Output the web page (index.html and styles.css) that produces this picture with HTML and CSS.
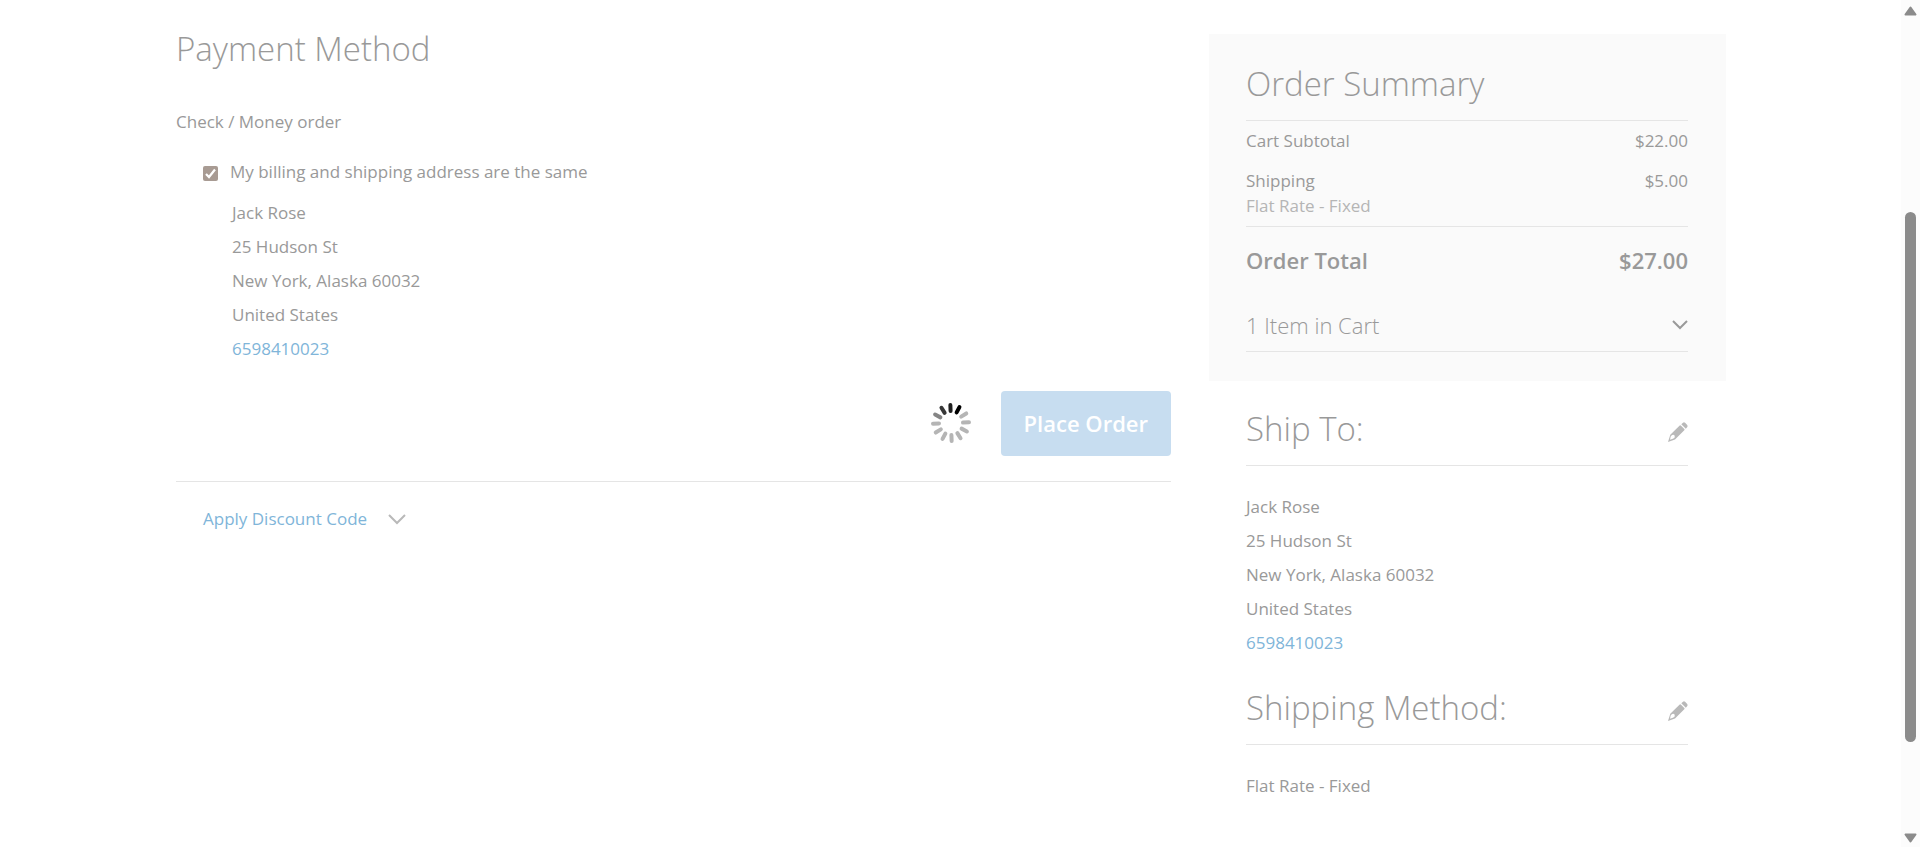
FILE: index.html
```html
<!DOCTYPE html>
<html lang="en">
<head>
<meta charset="utf-8">
<title>Checkout</title>
<link rel="stylesheet" href="styles.css">
</head>
<body>
<div class="page">
  <div class="checkout">
    <main class="payment">
      <h1 class="title">Payment Method</h1>
      <h2 class="method-name">Check / Money order</h2>
      <div class="method-content">
        <label class="same-address" for="same"><input id="same" class="checkbox" type="checkbox" checked>My billing and shipping address are the same</label>
        <address class="address billing-address">
          Jack Rose<br>25 Hudson St<br>New York, Alaska 60032<br>United States<br><a class="link" href="#">6598410023</a>
        </address>
      </div>
      <div class="actions">
        <svg class="spinner" viewBox="-21 -20 42 42" role="img" aria-label="Loading">
          <g stroke="#b5b5b5" stroke-width="4" stroke-linecap="round" transform="rotate(-2)">
            <path d="M0-12V-18" stroke="#202020"/>
            <path d="M0-12V-18" stroke="#000" transform="rotate(30)"/>
            <path d="M0-12V-18" transform="rotate(60)"/>
            <path d="M0-12V-18" transform="rotate(90)"/>
            <path d="M0-12V-18" transform="rotate(120)"/>
            <path d="M0-12V-18" transform="rotate(150)"/>
            <path d="M0-12V-18" transform="rotate(180)"/>
            <path d="M0-12V-18" transform="rotate(210)"/>
            <path d="M0-12V-18" transform="rotate(240)"/>
            <path d="M0-12V-18" transform="rotate(270)"/>
            <path d="M0-12V-18" stroke="#858585" transform="rotate(300)"/>
            <path d="M0-12V-18" stroke="#383838" transform="rotate(330)"/>
          </g>
        </svg>
        <button class="place-order" type="button">Place Order</button>
      </div>
      <div class="discount">
        <button class="discount-toggle" type="button">Apply Discount Code
          <svg class="discount-chevron" viewBox="0 0 18 12" aria-hidden="true"><path d="M1 2L9 10L17 2" fill="none" stroke="#b9b9b9" stroke-width="2"/></svg>
        </button>
      </div>
    </main>

    <aside class="sidebar">
      <section class="summary">
        <h2 class="title ruled">Order Summary</h2>
        <table class="totals">
          <tbody>
            <tr class="line"><th scope="row">Cart Subtotal</th><td>$22.00</td></tr>
            <tr class="line shipping"><th scope="row">Shipping<span class="carrier">Flat Rate - Fixed</span></th><td>$5.00</td></tr>
            <tr class="grand"><th scope="row">Order Total</th><td>$27.00</td></tr>
          </tbody>
        </table>
        <button class="cart-toggle" type="button">1 Item in Cart
          <svg class="cart-chevron" viewBox="0 0 16 10" aria-hidden="true"><path d="M1 1L8 8L15 1" fill="none" stroke="#999" stroke-width="2"/></svg>
        </button>
      </section>

      <section class="info">
        <div class="info-head ruled">
          <h2 class="title">Ship To:</h2>
          <button class="edit" type="button" aria-label="Edit shipping address">
            <svg class="pencil" viewBox="0 0 20 20"><path fill="#b9b9b9" fill-rule="evenodd" d="M0 20L2.3 12.8L11.7 3.6Q12.4 3 13 3.7L16.3 7Q16.900 7.600 16.300 8.300L7 17.400ZM2.700 14.500L2 17.700L5.400 16.600Q7.300 15.700 6.700 13.800Q5.600 12.300 3.800 13.200ZM13.300 2.300L15 .7Q16 0 17.100 .8L19.200 2.900Q20 4 19.300 5.100L17.800 6.700Z"/></svg>
          </button>
        </div>
        <address class="address">
          Jack Rose<br>25 Hudson St<br>New York, Alaska 60032<br>United States<br><a class="link" href="#">6598410023</a>
        </address>
      </section>

      <section class="info">
        <div class="info-head ruled">
          <h2 class="title">Shipping Method:</h2>
          <button class="edit" type="button" aria-label="Edit shipping method">
            <svg class="pencil" viewBox="0 0 20 20"><path fill="#b9b9b9" fill-rule="evenodd" d="M0 20L2.3 12.8L11.7 3.6Q12.4 3 13 3.7L16.3 7Q16.900 7.600 16.300 8.300L7 17.400ZM2.700 14.500L2 17.700L5.400 16.600Q7.300 15.700 6.700 13.800Q5.600 12.300 3.800 13.200ZM13.300 2.300L15 .7Q16 0 17.100 .8L19.200 2.900Q20 4 19.300 5.100L17.800 6.700Z"/></svg>
          </button>
        </div>
        <p class="address">Flat Rate - Fixed</p>
      </section>
    </aside>
  </div>
</div>
<div class="scrollbar" aria-hidden="true">
  <svg class="arrow" viewBox="0 0 13 10"><path d="M6.500 1.500L11.500 8.500H1.500Z" fill="#8b8b8b" stroke="#8b8b8b" stroke-width="2" stroke-linejoin="round"/></svg>
  <div class="track"><div class="thumb"></div></div>
  <svg class="arrow" viewBox="0 0 13 10"><path d="M1.500 1.500H11.500L6.500 8.500Z" fill="#8b8b8b" stroke="#8b8b8b" stroke-width="2" stroke-linejoin="round"/></svg>
</div>
</body>
</html>
```
FILE: styles.css
```css
* { box-sizing: border-box; }

body {
  margin: 0;
  display: flex;
  background: #fff;
  color: #999;
  font: 400 17px/24px "Open Sans", "Noto Sans", sans-serif;
}

h1, h2, p { margin: 0; font-weight: 400; }

button {
  padding: 0;
  border: 0;
  background: none;
  color: inherit;
  font: inherit;
  cursor: pointer;
}

svg { display: block; flex: none; }

.page { flex: 1; min-width: 0; }

.checkout {
  display: grid;
  grid-template-columns: 995fr 517fr;
  column-gap: 38px;
  max-width: 1601px;
  margin: 0 auto;
  padding: 0 25px 0 26px;
}

.title { font-size: 33px; line-height: 36px; font-weight: 300; }

.ruled { padding-bottom: 18px; border-bottom: 1px solid #e5e5e5; }

.link { color: #80b5d9; text-decoration: none; }

.address { font-style: normal; line-height: 34px; }

/* Payment column */
.payment { padding-top: 31px; }

.method-name { margin-top: 43px; font-size: 17px; line-height: 24px; }

.method-content { padding: 26px 0 0 27px; }

.same-address { display: flex; align-items: center; }

.checkbox {
  appearance: none;
  width: 15px;
  height: 15px;
  margin: 2px 12px 0 0;
  border-radius: 2px;
  background: #a89b93 url("data:image/svg+xml,%3Csvg xmlns='http://www.w3.org/2000/svg' viewBox='0 0 15 15'%3E%3Cpath d='M3 8L6 11L12 3.500' fill='none' stroke='white' stroke-width='2.200'/%3E%3C/svg%3E");
}

.billing-address { margin: 12px 0 0 29px; }

.actions {
  display: flex;
  justify-content: flex-end;
  align-items: center;
  gap: 29px;
  padding: 25px 0;
  border-bottom: 1px solid #e5e5e5;
}

.spinner { width: 42px; height: 42px; }

.place-order {
  padding: 16px 23px 17px;
  border-radius: 4px;
  background: #c7ddf0;
  color: #fff;
  font-size: 22px;
  line-height: 32px;
  font-weight: 600;
}

.discount { padding: 25px 0 0 27px; }

.discount-toggle { display: flex; align-items: center; gap: 21px; color: #80b5d9; }

.discount-chevron { width: 18px; height: 12px; }

/* Sidebar */
.sidebar { padding-top: 34px; }

.summary { padding: 32px 38px 29px 37px; background: #fafafa; }

.totals { width: 100%; border-collapse: collapse; }

.totals th, .totals td { padding: 0; font-weight: 400; vertical-align: top; }

.totals th { text-align: left; }

.totals td { text-align: right; }

.line th, .line td { padding: 8px 0; }

.carrier { display: block; line-height: 25px; color: #b5b5b5; }

.totals .grand th, .totals .grand td {
  padding: 17px 0 16px;
  border-top: 1px solid #e5e5e5;
  font-size: 22px;
  line-height: 32px;
  font-weight: 600;
}

.cart-toggle {
  display: flex;
  justify-content: space-between;
  align-items: center;
  width: 100%;
  padding: 17px 0 10px;
  border-bottom: 1px solid #e5e5e5;
  font-size: 22px;
  line-height: 32px;
  font-weight: 300;
}

.cart-chevron { width: 16px; height: 10px; }

.info { padding: 30px 38px 0 37px; }

.info-head { display: flex; justify-content: space-between; align-items: flex-start; }

.info .address { margin-top: 24px; }

.edit { padding-top: 11px; }

.pencil { width: 20px; height: 20px; }

/* Window scrollbar */
.scrollbar {
  position: sticky;
  top: 0;
  display: flex;
  flex: none;
  flex-direction: column;
  align-items: center;
  width: 19px;
  height: 100vh;
  padding: 6px 0 4px;
  background: #fcfcfc;
}

.arrow { width: 13px; height: 10px; }

.track { flex: 1; width: 11px; padding: 196px 0 91px; }

.thumb { height: 100%; border-radius: 6px; background: #8b8b8b; }
```
